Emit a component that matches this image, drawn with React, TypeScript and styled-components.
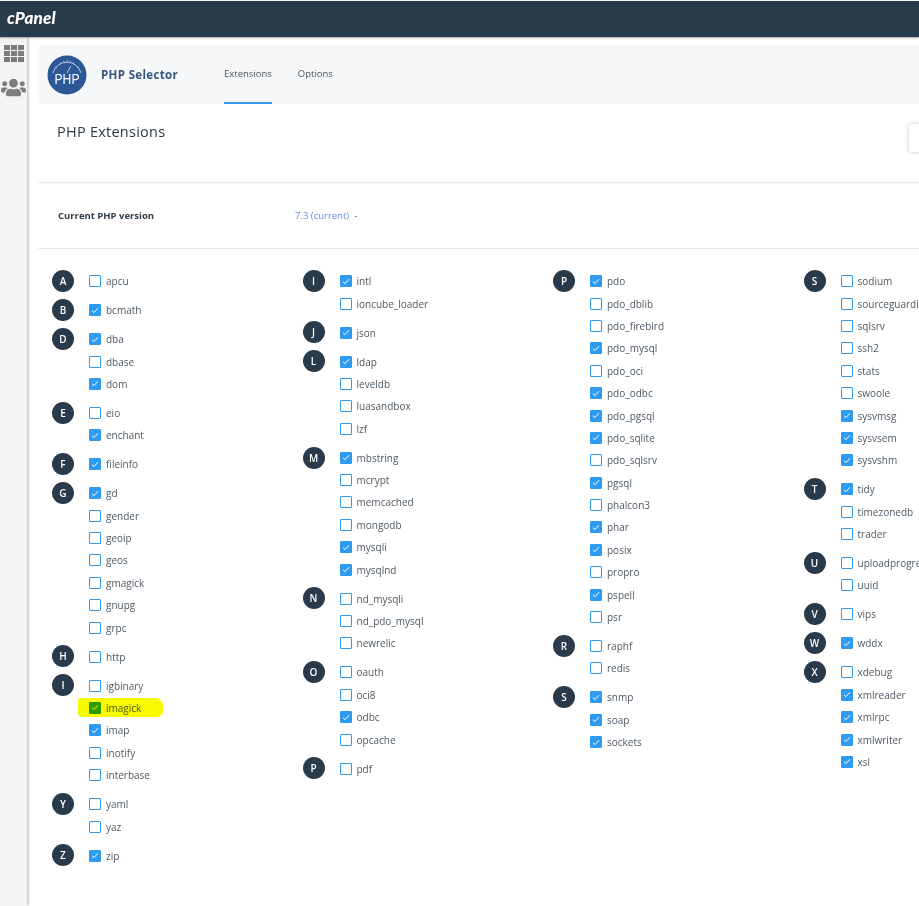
import React from "react";
import styled, { createGlobalStyle } from "styled-components";
import { FaUsers } from "react-icons/fa";

const GlobalStyle = createGlobalStyle`
  html, body {
    margin: 0;
    padding: 0;
    height: 100%;
    overflow: hidden;
    background: #ffffff;
    font-family: "Open Sans", "Liberation Sans", sans-serif;
  }
`;

const Page = styled.div`
  width: 919px;
  height: 906px;
  display: flex;
  flex-direction: column;
  overflow: hidden;
`;

const TopBar = styled.header`
  height: 36px;
  margin-top: 1px;
  flex-shrink: 0;
  background: #293a4a;
  display: flex;
  align-items: center;
  padding: 0 0 4px 7px;
  box-sizing: border-box;
  box-shadow: 0 1px 2px rgba(0, 0, 0, 0.35);
  position: relative;
`;

const Logo = styled.span`
  font-family: "Lato", "Liberation Sans", sans-serif;
  font-weight: 900;
  font-style: italic;
  font-size: 17px;
  letter-spacing: 0.2px;
  color: #ffffff;
`;

const Body = styled.div`
  flex: 1;
  display: flex;
  min-height: 0;
`;

const Sidebar = styled.aside`
  width: 27px;
  flex-shrink: 0;
  background: #f4f4f4;
  box-shadow: 1px 0 3px rgba(0, 0, 0, 0.3);
  display: flex;
  flex-direction: column;
  align-items: center;
  padding-top: 8px;
  box-sizing: border-box;
  gap: 13px;
  color: #7d7d7d;
`;

const AppGrid = styled.div`
  display: grid;
  grid-template-columns: repeat(3, 6px);
  grid-auto-rows: 5px;
  gap: 1px;
  margin-left: 0;

  span {
    background: #7d7d7d;
  }
`;

const Main = styled.main`
  flex: 1;
  min-width: 0;
  padding: 8px 0 0 11px;
  overflow: hidden;
`;

const AppHeader = styled.div`
  height: 59px;
  background: #f6f7f9;
  border-radius: 4px 0 0 4px;
  display: flex;
  align-items: center;
  padding-left: 9px;
  box-sizing: border-box;
`;

const AppName = styled.div`
  margin-left: 14px;
  width: 123px;
  font-size: 11.5px;
  font-weight: 700;
  letter-spacing: 0.35px;
  color: #34567f;
`;

const Tabs = styled.nav`
  display: flex;
  gap: 26px;
  align-self: stretch;
`;

const Tab = styled.div<{ $active?: boolean }>`
  display: flex;
  align-items: center;
  height: 57px;
  font-size: 9.5px;
  color: #4b5560;
  border-bottom: 2px solid ${(p) => (p.$active ? "#2f9bf0" : "transparent")};
`;

const TitleRow = styled.div`
  height: 79px;
  padding: 19px 0 0 19px;
  box-sizing: border-box;
  position: relative;
  border-bottom: 1px solid #eaeaea;
`;

const Title = styled.h1`
  margin: 0;
  font-size: 14.5px;
  line-height: 18px;
  font-weight: 400;
  letter-spacing: 0.25px;
  color: #2c3a46;
`;

const CornerButton = styled.div`
  position: absolute;
  left: 871px;
  top: 20px;
  width: 40px;
  height: 28px;
  background: #ffffff;
  border-radius: 2px;
  box-shadow: 0 0 4px rgba(0, 0, 0, 0.22);
`;

const VersionRow = styled.div`
  height: 66px;
  display: flex;
  align-items: center;
  padding-left: 20px;
  box-sizing: border-box;
  border-bottom: 1px solid #eaeaea;
`;

const VersionLabel = styled.div`
  width: 237px;
  font-size: 9.5px;
  font-weight: 700;
  color: #303c48;
`;

const VersionValue = styled.div`
  font-size: 9.5px;
  color: #5b8fec;
  display: flex;
  gap: 5px;

  span {
    color: #4b5560;
  }
`;

const Columns = styled.div`
  display: grid;
  grid-template-columns: repeat(4, 250.5px);
  padding: 21px 0 0 14px;
`;

const Column = styled.div`
  display: flex;
  flex-direction: column;
  gap: 6.6px;
`;

const Group = styled.section`
  display: flex;
  align-items: flex-start;
`;

const Badge = styled.div`
  width: 22px;
  height: 22px;
  border-radius: 50%;
  background: #293a4a;
  color: #ffffff;
  font-size: 10px;
  font-weight: 600;
  display: flex;
  align-items: center;
  justify-content: center;
  flex-shrink: 0;
  margin-right: 15px;
`;

const Items = styled.div`
  display: flex;
  flex-direction: column;
  min-width: 0;
`;

const Item = styled.label`
  height: 22.4px;
  display: flex;
  align-items: center;
  gap: 5px;
  font-size: 10px;
  color: #4e5964;
  white-space: nowrap;
  position: relative;
`;

const Box = styled.span<{ $checked: boolean }>`
  width: 12px;
  height: 12px;
  box-sizing: border-box;
  border-radius: 1px;
  border: 1px solid #2f9bf0;
  background: ${(p) => (p.$checked ? "#2f9bf0" : "#ffffff")};
  display: flex;
  align-items: center;
  justify-content: center;
  flex-shrink: 0;
`;

const Highlight = styled.span`
  position: absolute;
  left: -11px;
  top: 1px;
  width: 85px;
  height: 19px;
  background: #f8fb00;
  border-radius: 3px 8px 6px 4px;
  mix-blend-mode: multiply;
  pointer-events: none;
`;

const Check = () => (
  <svg width="8" height="7" viewBox="0 0 8 7" fill="none">
    <path d="M1 3.8 L3 5.6 L7 1.2" stroke="#ffffff" strokeWidth="1" />
  </svg>
);

const PhpLogo = () => (
  <svg width="40" height="40" viewBox="0 0 40 40">
    <circle cx="20" cy="20" r="19.5" fill="#2b5796" />
    <path d="M6 18 A14.5 14.5 0 0 1 34 18" fill="none" stroke="#dfe6f0" strokeWidth="0.8" />
    <path
      d="M9.5 13 L8 11.8 M14 8.8 L13 7.2 M20 6.8 L20 5 M26 8.8 L27 7.2 M30.5 13 L32 11.8 M17 7 L16.7 5.8 M23 7 L23.3 5.8"
      stroke="#dfe6f0"
      strokeWidth="0.8"
    />
    <path d="M20 18 L24 11" stroke="#dfe6f0" strokeWidth="0.8" />
    <text
      x="20"
      y="29"
      textAnchor="middle"
      fontSize="15"
      fontFamily="Liberation Sans, sans-serif"
      fill="#ffffff"
      textLength="25"
      lengthAdjust="spacingAndGlyphs"
    >
      PHP
    </text>
  </svg>
);

// "+" in front of a name means the extension is ticked
type ExtGroup = [string, string];

const columns: ExtGroup[][] = [
  [
    ["A", "apcu"],
    ["B", "+bcmath"],
    ["D", "+dba dbase +dom"],
    ["E", "eio +enchant"],
    ["F", "+fileinfo"],
    ["G", "+gd gender geoip geos gmagick gnupg grpc"],
    ["H", "http"],
    ["I", "igbinary +imagick +imap inotify interbase"],
    ["Y", "yaml yaz"],
    ["Z", "+zip"],
  ],
  [
    ["I", "+intl ioncube_loader"],
    ["J", "+json"],
    ["L", "+ldap leveldb luasandbox lzf"],
    ["M", "+mbstring mcrypt memcached mongodb +mysqli +mysqlnd"],
    ["N", "nd_mysqli nd_pdo_mysql newrelic"],
    ["O", "oauth oci8 +odbc opcache"],
    ["P", "pdf"],
  ],
  [
    [
      "P",
      "+pdo pdo_dblib pdo_firebird +pdo_mysql pdo_oci +pdo_odbc +pdo_pgsql +pdo_sqlite pdo_sqlsrv +pgsql phalcon3 +phar +posix propro +pspell psr",
    ],
    ["R", "raphf redis"],
    ["S", "+snmp +soap +sockets"],
  ],
  [
    ["S", "sodium sourceguardian sqlsrv ssh2 stats swoole +sysvmsg +sysvsem +sysvshm"],
    ["T", "+tidy timezonedb trader"],
    ["U", "uploadprogress uuid"],
    ["V", "vips"],
    ["W", "+wddx"],
    ["X", "xdebug +xmlreader +xmlrpc +xmlwriter +xsl"],
  ],
];

const App: React.FC = () => {
  return (
    <Page>
      <GlobalStyle />
      <TopBar>
        <Logo>cPanel</Logo>
      </TopBar>
      <Body>
        <Sidebar>
          <AppGrid>
            {Array.from({ length: 9 }).map((_, i) => (
              <span key={i} />
            ))}
          </AppGrid>
          <FaUsers size={25} />
        </Sidebar>
        <Main>
          <AppHeader>
            <PhpLogo />
            <AppName>PHP Selector</AppName>
            <Tabs>
              <Tab $active>Extensions</Tab>
              <Tab>Options</Tab>
            </Tabs>
          </AppHeader>
          <TitleRow>
            <Title>PHP Extensions</Title>
            <CornerButton />
          </TitleRow>
          <VersionRow>
            <VersionLabel>Current PHP version</VersionLabel>
            <VersionValue>
              7.3 (current) <span>-</span>
            </VersionValue>
          </VersionRow>
          <Columns>
            {columns.map((groups, c) => (
              <Column key={c}>
                {groups.map(([letter, names]) => (
                  <Group key={letter + names}>
                    <Badge>{letter}</Badge>
                    <Items>
                      {names.split(" ").map((n) => {
                        const checked = n.startsWith("+");
                        const name = checked ? n.slice(1) : n;
                        return (
                          <Item key={name}>
                            <Box $checked={checked}>{checked && <Check />}</Box>
                            {name}
                            {name === "imagick" && <Highlight />}
                          </Item>
                        );
                      })}
                    </Items>
                  </Group>
                ))}
              </Column>
            ))}
          </Columns>
        </Main>
      </Body>
    </Page>
  );
};

export default App;
